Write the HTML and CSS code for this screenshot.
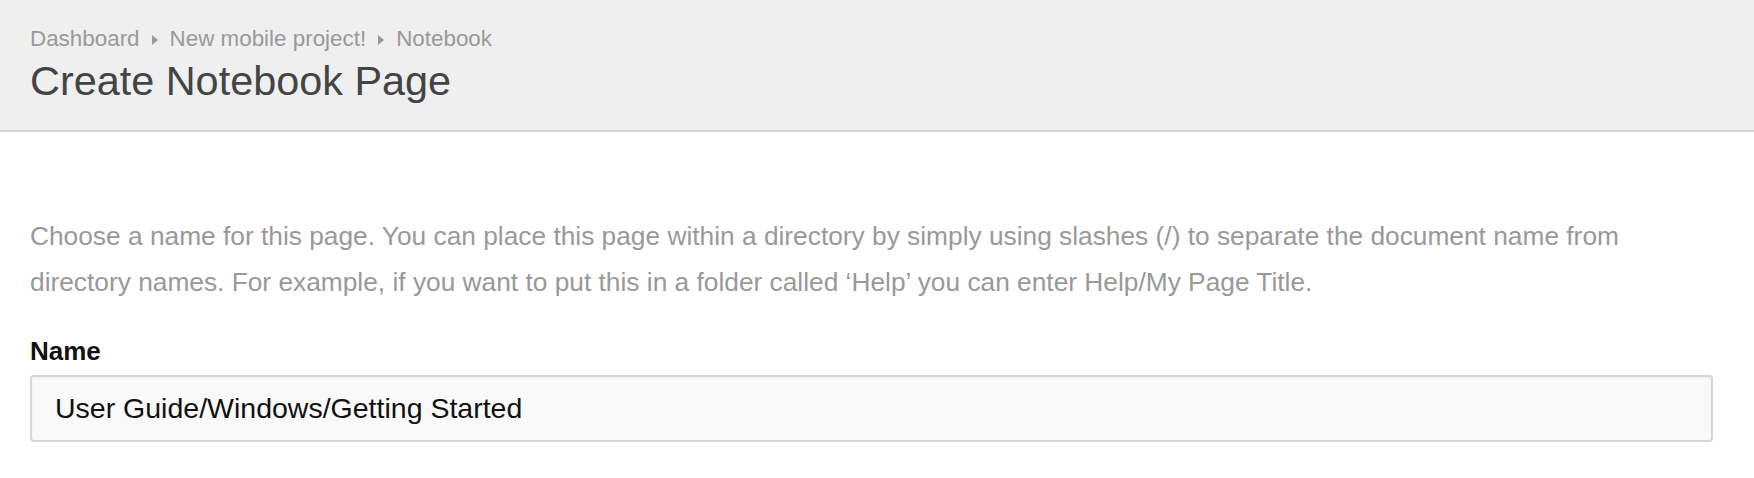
FILE: index.html
```html
<!DOCTYPE html>
<html lang="en">
<head>
    <meta charset="UTF-8">
    <meta name="viewport" content="width=device-width, initial-scale=1.0">
    <title>Create Notebook Page</title>
    <link rel="stylesheet" href="styles.css">
</head>
<body>
    <header class="page-header">
        <nav class="breadcrumb">
            <a href="#">Dashboard</a>
            <span class="crumb-sep"></span>
            <a href="#">New mobile project!</a>
            <span class="crumb-sep"></span>
            <a href="#">Notebook</a>
        </nav>
        <h1>Create Notebook Page</h1>
    </header>

    <main class="content">
        <p class="help-text">Choose a name for this page. You can place this page within a directory by simply using slashes (/) to separate the document name from directory names. For example, if you want to put this in a folder called &lsquo;Help&rsquo; you can enter Help/My Page Title.</p>
        <label class="field-label" for="page-name">Name</label>
        <input type="text" id="page-name" class="text-input" value="User Guide/Windows/Getting Started">
    </main>
</body>
</html>
```

FILE: styles.css
```css
body {
    font-family: "Liberation Sans", Arial, sans-serif;
    background-color: #fff;
    margin: 0;
    padding: 0;
}
.page-header {
    background-color: #efefef;
    border-bottom: 2px solid #d5d5d5;
    padding: 26px 41px 25px 30px;
}
.breadcrumb {
    display: flex;
    align-items: center;
    font-size: 22.4px;
    line-height: 26px;
}
.breadcrumb a {
    color: #999;
    text-decoration: none;
}
.crumb-sep {
    width: 0;
    height: 0;
    border-left: 6px solid #999;
    border-top: 5px solid transparent;
    border-bottom: 5px solid transparent;
    margin: 2px 12px 0 12px;
}
h1 {
    margin: 5px 0 0;
    font-size: 41.4px;
    line-height: 48px;
    font-weight: normal;
    color: #444;
}
.content {
    padding: 81px 41px 0 30px;
}
.help-text {
    margin: 0;
    font-size: 26.3px;
    line-height: 46px;
    color: #999;
}
.field-label {
    display: block;
    margin: 31px 0 9px;
    font-size: 26px;
    line-height: 30px;
    font-weight: bold;
    color: #111;
}
.text-input {
    display: block;
    box-sizing: border-box;
    width: 100%;
    height: 67px;
    margin: 0;
    padding: 0 23px;
    border: 2px solid #d6d6d6;
    border-radius: 4px;
    background-color: #f9f9f9;
    box-shadow: inset 0 1px 2px rgba(0, 0, 0, 0.05);
    font-family: inherit;
    font-size: 28.5px;
    color: #111;
}
```
